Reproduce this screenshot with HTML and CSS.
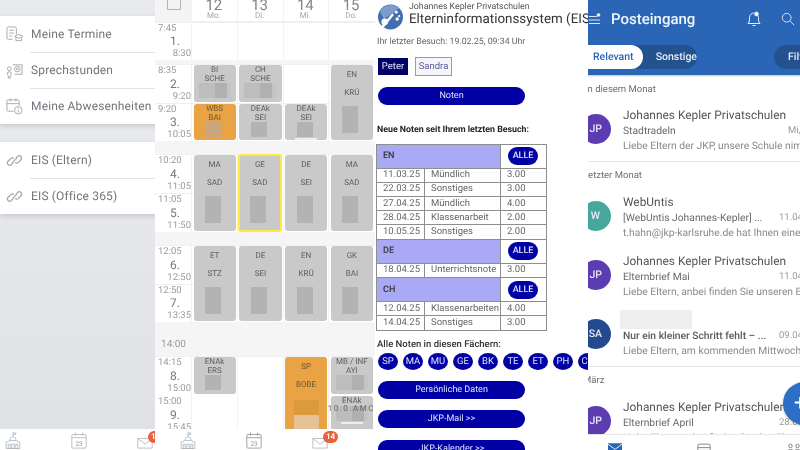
FILE: index.html
```html
<!DOCTYPE html>
<html lang="de">
<head>
<meta charset="utf-8">
<title>Schul-Apps</title>
<link rel="stylesheet" href="styles.css">
</head>
<body>
<main class="shot">

<section class="menu">
  <div class="menu-card">
    <div class="menu-row"><svg class="menu-ico" viewBox="0 0 18 18"><path d="M11 9V2.500A1.500 1.500 0 0 0 9.500 1H2.500A1.500 1.500 0 0 0 1 2.500v10A1.500 1.500 0 0 0 2.500 14H7M3.500 4.500h5M3.500 7.500h5M3.500 10.500h3M9 11l4.500-2 4.500 2-4.500 2zM10.500 12.500v3h6v-3"/></svg><span class="menu-label">Meine Termine</span></div>
    <div class="menu-row"><svg class="menu-ico" viewBox="0 0 18 18"><circle cx="3.500" cy="7" r="2"/><path d="M2 10.500h3l.5 3-1 1v2.500H2.500V14.500l-1-1zM7 3h10v10H9"/><circle cx="12" cy="7.500" r="3"/><circle cx="12" cy="7.500" r="1"/></svg><span class="menu-label">Sprechstunden</span></div>
    <div class="menu-row"><svg class="menu-ico" viewBox="0 0 18 18"><path d="M8 14H2.500A1.500 1.500 0 0 1 1 12.500v-9A1.500 1.500 0 0 1 2.500 2h10A1.500 1.500 0 0 1 14 3.500V8M1 6h13M4.500 .5v3M10.500 .5v3"/><circle cx="13" cy="13" r="4"/><path d="M13 12.500v3M13 10.500v1"/></svg><span class="menu-label">Meine Abwesenheiten</span></div>
  </div>
  <div class="menu-card menu-card-low">
    <div class="menu-row"><svg class="menu-ico menu-link" viewBox="0 0 18 18"><path d="M7.500 11.500l-2 2a2.500 2.500 0 0 1-3.500-3.500l3-3a2.500 2.500 0 0 1 3.500 0M10.500 6.500l2-2A2.500 2.500 0 0 1 16 8l-3 3a2.500 2.500 0 0 1-3.500 0M6.500 11.500l5-5"/></svg><span class="menu-label">EIS (Eltern)</span></div>
    <div class="menu-row"><svg class="menu-ico menu-link" viewBox="0 0 18 18"><path d="M7.500 11.500l-2 2a2.500 2.500 0 0 1-3.500-3.500l3-3a2.500 2.500 0 0 1 3.500 0M10.500 6.500l2-2A2.500 2.500 0 0 1 16 8l-3 3a2.500 2.500 0 0 1-3.500 0M6.500 11.500l5-5"/></svg><span class="menu-label">EIS (Office 365)</span></div>
  </div>
  <nav class="app-nav app-nav-shift">
    <div class="nav-item"><svg class="nav-ico" viewBox="0 0 20 22"><path d="M10 1v5M10 1.500h3.500v2H10M6.500 11V8L10 6l3.500 2v3M1.500 21v-8l5-2h7l5 2v8zM4 15.500h2.500V21H4zM8.500 15.500h3V21h-3zM13.500 15.500H16V21h-2.500z"/></svg></div>
    <div class="nav-item"><svg class="nav-ico" viewBox="0 0 20 22"><path d="M2.500 3.500h15a1.500 1.500 0 0 1 1.500 1.500v14a1.500 1.500 0 0 1-1.500 1.500h-15A1.500 1.500 0 0 1 1 19V5a1.500 1.500 0 0 1 1.500-1.500zM1 7.500h18M5.500 1v4M14.500 1v4"/><text class="nav-date" x="10" y="17.500">23</text></svg></div>
    <div class="nav-item"><svg class="nav-ico nav-mail" viewBox="0 0 20 16"><path d="M1 3h18v12H1zM1 3l9 7 9-7"/></svg><span class="badge">14</span></div>
  </nav>
</section>

<section class="plan">
  <div class="plan-grid">
    <div class="vline c0"></div><div class="vline c1"></div><div class="vline c2"></div><div class="vline c3"></div>
    <div class="corner"><span class="checkbox"></span></div>
    <div class="day c1"><b>12</b><span>Mo.</span></div>
    <div class="day c2"><b>13</b><span>Di.</span></div>
    <div class="day c3"><b>14</b><span>Mi.</span></div>
    <div class="day c4"><b>15</b><span>Do.</span></div>

    <div class="band r3"></div><div class="band r6"></div><div class="band r9"></div>
    <div class="band r12"></div>
    <div class="hline r2"></div><div class="hline r4"></div><div class="hline r5"></div><div class="hline r7"></div><div class="hline r8"></div><div class="hline r10"></div><div class="hline r11"></div><div class="hline r13"></div>

    <div class="slot r2"><span>7:45</span><b>1.</b><span class="end">8:30</span></div>
    <div class="slot r4"><span>8:35</span><b>2.</b><span class="end">9:20</span></div>
    <div class="slot r5"><span>9:20</span><b>3.</b><span class="end">10:05</span></div>
    <div class="slot r7"><span>10:20</span><b>4.</b><span class="end">11:05</span></div>
    <div class="slot r8"><span>11:05</span><b>5.</b><span class="end">11:50</span></div>
    <div class="slot r10"><span>12:05</span><b>6.</b><span class="end">12:50</span></div>
    <div class="slot r11"><span>12:50</span><b>7.</b><span class="end">13:35</span></div>
    <div class="noon r12">14:00</div>
    <div class="slot r13"><span>14:15</span><b>8.</b><span class="end">15:00</span></div>
    <div class="slot r14"><span>15:00</span><b>9.</b><span class="end">15:45</span></div>

    <div class="lesson c1 r4"><span>BI</span><span>SCHE</span><i class="blot wide"></i></div>
    <div class="lesson c2 r4"><span>CH</span><span>SCHE</span><i class="blot wide"></i></div>
    <div class="lesson double c4 r4s"><span>EN</span><span>KRÜ</span><i class="blot tall"></i></div>
    <div class="lesson orange c1 r5"><span>WBS</span><span>BAI</span><i class="blot mid"></i></div>
    <div class="lesson c2 r5"><span>DEAk</span><span>SEI</span><i class="blot mid"></i></div>
    <div class="lesson c3 r5"><span>DEAk</span><span>SEI</span><i class="blot mid"></i><i class="bar"></i></div>

    <div class="lesson double c1 r7s"><span>MA</span><span>SAD</span><i class="blot tall"></i></div>
    <div class="lesson double now c2 r7s"><span>GE</span><span>SAD</span><i class="blot tall"></i></div>
    <div class="lesson double c3 r7s"><span>DE</span><span>SEI</span><i class="blot tall"></i></div>
    <div class="lesson double c4 r7s"><span>MA</span><span>SAD</span><i class="blot tall"></i></div>

    <div class="lesson double c1 r10s"><span>ET</span><span>STZ</span><i class="blot tall"></i></div>
    <div class="lesson double c2 r10s"><span>DE</span><span>SEI</span><i class="blot tall"></i></div>
    <div class="lesson double c3 r10s"><span>EN</span><span>KRÜ</span><i class="blot tall"></i></div>
    <div class="lesson double c4 r10s"><span>GK</span><span>BAI</span><i class="blot tall"></i></div>

    <div class="lesson c1 r13"><span>ENAk</span><span>ERS</span><i class="blot mid"></i></div>
    <div class="lesson double orange c3 r13s"><span>SP</span><span>BOBE</span><i class="blot orange-wide"></i><i class="blot orange-light"></i></div>
    <div class="lesson c4 r13"><span>MB / INF</span><span>AYI</span><i class="blot wide"></i></div>
    <div class="lesson c4 r14"><span>ENAk</span><i class="blot wide"></i><i class="bar"></i><span class="ghost">10.0.AMC</span></div>
  </div>
  <nav class="app-nav">
    <div class="nav-item"><svg class="nav-ico" viewBox="0 0 20 22"><path d="M10 1v5M10 1.500h3.500v2H10M6.500 11V8L10 6l3.500 2v3M1.500 21v-8l5-2h7l5 2v8zM4 15.500h2.500V21H4zM8.500 15.500h3V21h-3zM13.500 15.500H16V21h-2.500z"/></svg></div>
    <div class="nav-item"><svg class="nav-ico nav-dark" viewBox="0 0 20 22"><path d="M2.500 3.500h15a1.500 1.500 0 0 1 1.500 1.500v14a1.500 1.500 0 0 1-1.500 1.500h-15A1.500 1.500 0 0 1 1 19V5a1.500 1.500 0 0 1 1.500-1.500zM1 7.500h18M5.500 1v4M14.500 1v4"/><text class="nav-date" x="10" y="17.500">23</text></svg></div>
    <div class="nav-item"><svg class="nav-ico nav-mail" viewBox="0 0 20 16"><path d="M1 3h18v12H1zM1 3l9 7 9-7"/></svg><span class="badge">14</span></div>
  </nav>
</section>

<section class="eis">
  <header class="eis-head">
    <svg class="eis-logo" viewBox="0 0 26 26"><circle cx="13" cy="13" r="13" fill="#3f6fb0"/><path d="M2 7a13 13 0 0 1 20-3l-8 6-8 5z" fill="#7d9ccb"/><path d="M3 23L15 9l1.500 2L6 24z" fill="#fff"/><circle cx="7" cy="18" r="3.500" fill="#fff"/><circle cx="19" cy="8" r="1.500" fill="#fff"/><circle cx="22" cy="12" r="1.200" fill="#fff"/><circle cx="20" cy="15" r="1.800" fill="#fff"/></svg>
    <div class="eis-titles">
      <div class="eis-school">Johannes Kepler Privatschulen</div>
      <div class="eis-title">Elterninformationssystem (EIS)</div>
    </div>
  </header>
  <p class="eis-visit">Ihr letzter Besuch: 19.02.25, 09:34 Uhr</p>
  <div class="kids"><span class="kid kid-on">Peter</span><span class="kid">Sandra</span></div>
  <div class="pill-btn">Noten</div>
  <p class="eis-h">Neue Noten seit Ihrem letzten Besuch:</p>
  <table class="grades">
    <colgroup><col class="col-date"><col class="col-type"><col class="col-mark"></colgroup>
    <tr class="subj"><th colspan="2">EN</th><th><span class="alle">ALLE</span></th></tr>
    <tr><td>11.03.25</td><td>Mündlich</td><td>3.00</td></tr>
    <tr><td>22.03.25</td><td>Sonstiges</td><td>3.00</td></tr>
    <tr><td>27.04.25</td><td>Mündlich</td><td>4.00</td></tr>
    <tr><td>28.04.25</td><td>Klassenarbeit</td><td>2.00</td></tr>
    <tr><td>10.05.25</td><td>Sonstiges</td><td>2.00</td></tr>
    <tr class="subj"><th colspan="2">DE</th><th><span class="alle">ALLE</span></th></tr>
    <tr><td>18.04.25</td><td>Unterrichtsnote</td><td>3.00</td></tr>
    <tr class="subj"><th colspan="2">CH</th><th><span class="alle">ALLE</span></th></tr>
    <tr><td>12.04.25</td><td>Klassenarbeiten</td><td>4.00</td></tr>
    <tr><td>14.04.25</td><td>Sonstiges</td><td>3.00</td></tr>
  </table>
  <p class="eis-all">Alle Noten in diesen Fächern:</p>
  <div class="subjects"><span>SP</span><span>MA</span><span>MU</span><span>GE</span><span>BK</span><span>TE</span><span>ET</span><span>PH</span><span>CH</span></div>
  <div class="pill-btn pill-tight">Persönliche Daten</div>
  <div class="pill-btn pill-tight">JKP-Mail &gt;&gt;</div>
  <div class="pill-btn pill-tight">JKP-Kalender &gt;&gt;</div>
</section>

<section class="mail">
  <header class="mail-head">
    <div class="mail-bar">
      <svg class="burger" viewBox="0 0 12 12"><path d="M0 3.500h8M0 7h11M0 10.500h11"/><circle cx="9.500" cy="2" r="2" class="dot"/></svg>
      <h1 class="mail-title">Posteingang</h1>
      <svg class="mail-bell" viewBox="0 0 16 16"><path d="M8 2a4.500 4.500 0 0 0-4.500 4.500V10L2 12.500h12L12.500 10V6.500A4.500 4.500 0 0 0 8 2zM6.500 14.500h3"/><circle cx="10.500" cy="3" r="2.500" class="dot"/></svg>
      <svg class="mail-search" viewBox="0 0 16 16"><circle cx="6.500" cy="6.500" r="5"/><path d="M10 10l5 5"/></svg>
    </div>
    <div class="mail-tabs">
      <div class="tab-group"><span class="tab tab-on">Relevant</span><span class="tab">Sonstige</span></div>
      <span class="tab-filter">Filter</span>
    </div>
  </header>
  <div class="mail-label">In diesem Monat</div>
  <article class="msg">
    <span class="avatar av-purple">JP</span>
    <div class="msg-body">
      <div class="msg-from">Johannes Kepler Privatschulen</div>
      <div class="msg-sub"><span class="subject subject-long">Stadtradeln</span><span class="date">Mi, 14.05.</span></div>
      <div class="msg-prev">Liebe Eltern der JKP, unsere Schule nimmt teil</div>
    </div>
  </article>
  <div class="mail-rule"></div>
  <div class="mail-label mail-label-b">Letzter Monat</div>
  <article class="msg">
    <span class="avatar av-teal">W</span>
    <div class="msg-body">
      <div class="msg-from">WebUntis</div>
      <div class="msg-sub"><span class="subject">[WebUntis Johannes-Kepler] ...</span><span class="date">11.04.25</span></div>
      <div class="msg-prev">t.hahn@jkp-karlsruhe.de hat Ihnen eine Nachricht</div>
    </div>
  </article>
  <article class="msg">
    <span class="avatar av-purple">JP</span>
    <div class="msg-body">
      <div class="msg-from">Johannes Kepler Privatschulen</div>
      <div class="msg-sub"><span class="subject">Elternbrief Mai</span><span class="date">11.04.25</span></div>
      <div class="msg-prev">Liebe Eltern, anbei finden Sie unseren Elternbrief</div>
    </div>
  </article>
  <article class="msg">
    <span class="avatar av-navy">SA</span>
    <div class="msg-body">
      <div class="msg-blot"></div>
      <div class="msg-sub"><span class="subject subject-strong">Nur ein kleiner Schritt fehlt – ...</span><span class="date">09.04.25</span></div>
      <div class="msg-prev">Liebe Eltern, am kommenden Mittwoch findet</div>
    </div>
  </article>
  <div class="mail-rule mail-rule-b"></div>
  <div class="mail-label mail-label-b">März</div>
  <article class="msg">
    <span class="avatar av-purple">JP</span>
    <div class="msg-body">
      <div class="msg-from">Johannes Kepler Privatschulen</div>
      <div class="msg-sub"><span class="subject">Elternbrief April</span><span class="date">28.03.25</span></div>
      <div class="msg-prev">Liebe Eltern, anbei finden Sie den Elternbrief</div>
    </div>
  </article>
  <span class="fab">+</span>
  <nav class="mail-nav">
    <svg class="mail-nav-ico mail-nav-on" viewBox="0 0 16 12"><path d="M0 0h16v12H0z"/><path d="M0 1l8 6 8-6" class="cut"/></svg>
    <svg class="mail-nav-ico mail-nav-cal" viewBox="0 0 16 12"><path d="M1 12V3a2 2 0 0 1 2-2h10a2 2 0 0 1 2 2v9M1 5h14M4 8h1M7.500 8h1M11 8h1"/></svg>
    <svg class="mail-nav-ico mail-nav-ppl" viewBox="0 0 16 12"><circle cx="4" cy="3" r="2"/><circle cx="12" cy="3" r="2"/><path d="M0 11a4 4 0 0 1 8 0M8 11a4 4 0 0 1 8 0"/></svg>
  </nav>
</section>

</main>
</body>
</html>
```
FILE: styles.css
```css
* { box-sizing: border-box; }
html, body { margin: 0; padding: 0; background: #fff; }
body { width: 800px; height: 450px; overflow: hidden; font-family: Roboto, "Liberation Sans", sans-serif; text-rendering: geometricPrecision; }
.shot { display: flex; width: 800px; height: 450px; filter: blur(0.45px); }

/* Panel 1: menu */
.menu { position: relative; width: 155px; height: 450px; flex: none; overflow: hidden; display: flex; flex-direction: column; padding-top: 16px; background: linear-gradient(#e9eaed 0, #e4e5e9 15%, #e8e9ec 30%, #dfe1e5 100%); }
.menu-card { width: 175px; background: #fff; box-shadow: 0 2px 5px rgba(0,0,0,.14); flex: none; }
.menu-card-low { margin-top: 18px; }
.menu-row { display: flex; align-items: center; height: 36px; position: relative; }
.menu-row + .menu-row::before { content: ""; position: absolute; left: 30px; right: 0; top: 0; height: 1px; background: #e3e3e3; }
.menu-ico { width: 17px; height: 17px; margin-left: 6px; fill: none; stroke: #a3a8ad; stroke-width: 1; flex: none; }
.menu-link { stroke-width: 1.3; }
.menu-label { margin-left: 8px; font-size: 12px; color: #70767c; letter-spacing: .15px; white-space: nowrap; }

/* shared app nav */
.app-nav { margin-top: auto; height: 21px; flex: none; background: #fff; display: grid; grid-template-columns: repeat(3, 66px); }
.app-nav-shift { margin-left: -20px; width: 198px; }
.nav-item { position: relative; display: flex; justify-content: center; align-items: flex-start; }
.nav-ico { width: 16px; height: 21px; fill: none; stroke: #a9b4bd; stroke-width: 1; margin-top: 1px; }
.nav-dark { stroke: #8a8f93; }
.nav-mail { margin-top: 3px; overflow: visible; }
.nav-date { font-size: 8px; fill: #999; stroke: none; text-anchor: middle; }
.badge { position: absolute; left: 36px; top: 2px; width: 15px; height: 12px; border-radius: 6px; background: #e9603a; color: #fff; font-size: 8px; font-weight: 700; line-height: 12px; text-align: center; }

/* Panel 2: timetable */
.plan { width: 220px; height: 450px; flex: none; overflow: hidden; display: flex; flex-direction: column; background: #fff; }
.plan-grid { position: relative; height: 429px; flex: none; overflow: hidden; display: grid; grid-template-columns: 37px repeat(4, 1fr); grid-template-rows: 22px 38px 4px 39px 38px 13px 39px 39px 13px 39px 38px 34px 39px 39px; }
.c0 { grid-column: 1; } .c1 { grid-column: 2; } .c2 { grid-column: 3; } .c3 { grid-column: 4; } .c4 { grid-column: 5; }
.r2 { grid-row: 2; } .r3 { grid-row: 3; } .r4 { grid-row: 4; } .r5 { grid-row: 5; } .r6 { grid-row: 6; } .r7 { grid-row: 7; } .r8 { grid-row: 8; } .r9 { grid-row: 9; } .r10 { grid-row: 10; } .r11 { grid-row: 11; } .r12 { grid-row: 12; } .r13 { grid-row: 13; } .r14 { grid-row: 14; }
.r4s { grid-row: 4 / span 2; } .r7s { grid-row: 7 / span 2; } .r10s { grid-row: 10 / span 2; } .r13s { grid-row: 13 / span 2; }
.vline { grid-row: 1 / -1; border-right: 1px solid #f2f2f2; }
.band { grid-column: 1 / -1; background: #f5f5f5; }
.hline { grid-column: 1 / -1; border-top: 1px solid #f0f0f0; }
.corner { grid-column: 1; grid-row: 1; background: #f4f4f4; display: flex; justify-content: center; }
.checkbox { width: 14px; height: 10px; border: 1px solid #b4b4b4; border-top: 0; border-radius: 0 0 1px 1px; }
.day { grid-row: 1; display: flex; flex-direction: column; align-items: center; border-bottom: 1px solid #eee; padding-right: 2px; }
.day b { font-weight: 400; font-size: 15px; line-height: 11px; color: #858585; }
.day span { font-size: 8px; line-height: 10px; color: #a5a5a5; }
.slot { grid-column: 1; display: flex; flex-direction: column; justify-content: space-between; padding: 1px 1px 0 3px; font-size: 9.500px; line-height: 12px; color: #9a9a9a; }
.slot b { font-weight: 400; font-size: 12px; line-height: 13px; color: #777; padding-left: 12px; }
.slot .end { text-align: right; }
.noon { grid-column: 1; display: flex; align-items: center; justify-content: center; padding-top: 11px; font-size: 10px; color: #999; }
.lesson { position: relative; margin: 1px 2px 1px 1.5px; border-radius: 3px; background: #c9c9c9; display: flex; flex-direction: column; align-items: center; padding-top: 1px; font-size: 8px; line-height: 8.500px; color: #5d5d5d; overflow: hidden; }
.lesson.double { padding-top: 1px; line-height: 18px; }
.lesson.orange { background: #e9a344; color: #6b5330; }
.lesson.now { border: 2px solid #fdec3f; padding-top: 0; margin: 0 1.500px 0 0; }
.lesson.c4.r14 { overflow: visible; }
.blot { display: block; background: #b3b3b3; flex: none; }
.wide { width: 32px; height: 15px; background: linear-gradient(90deg, #bdbdbd 0 50%, #b0b0b0 50% 88%, #c4c4c4 88%); }
.mid { width: 16px; height: 15px; margin-right: 3px; }
.tall { width: 16px; height: 27px; margin-top: 4px; margin-right: 3px; }
.orange .mid { background: #caa67f; }
.orange-wide { width: 25px; height: 15px; background: #dc9a3f; margin-top: 6px; }
.orange-light { width: 25px; height: 14px; background: #e6c096; }
.bar { display: block; width: 22px; height: 2px; background: #eeeeee; margin-top: 1px; flex: none; }
.orange .bar { background: #e6e6e6; }
.ghost { position: absolute; left: -3px; top: 9px; font-size: 8px; color: #666; white-space: nowrap; letter-spacing: 1.500px; }

/* Panel 3: EIS */
.eis { width: 213px; height: 450px; flex: none; overflow: hidden; background: #fff; padding-left: 2px; color: #444; }
.eis-head { display: flex; align-items: flex-start; padding: 4px 0 0 1px; height: 36px; }
.eis-logo { width: 25px; height: 26px; flex: none; }
.eis-titles { margin-left: 6px; white-space: nowrap; }
.eis-school { font-size: 8.800px; line-height: 9px; color: #555; margin-top: -1px; }
.eis-title { font-size: 13.400px; line-height: 16px; color: #333; }
.eis-visit { margin: 0; font-size: 8.800px; line-height: 12px; color: #666; }
.kids { display: flex; gap: 7px; align-items: center; margin: 9px 0 0 1px; height: 19px; }
.kid { display: inline-block; width: 37px; height: 19px; border: 1px solid #9898b8; background: #f5f5fa; color: #5a5a9a; font-size: 9.500px; line-height: 17px; text-align: center; }
.kid-on { width: 30px; height: 17px; background: #000066; border-color: #000066; color: #e8e8ff; line-height: 15px; }
.pill-btn { width: 147px; height: 18px; margin: 11px 0 0 1px; border-radius: 9px; background: #0000a5; color: #dfe3ff; font-size: 9px; line-height: 18px; text-align: center; }
.eis-h { margin: 19px 0 0; font-size: 8.800px; font-weight: 700; line-height: 12px; color: #222; }
.grades { width: 170px; margin: 7.500px 0 0 -1px; border-collapse: collapse; table-layout: fixed; font-size: 9.500px; color: #666; }
.col-date { width: 48px; }
.col-type { width: 76px; }
.col-mark { width: 46px; }
.grades td, .grades th { border: 1px solid #8e8e8e; padding: 0 0 0 6px; height: 14.200px; line-height: 12px; font-weight: 400; text-align: left; white-space: nowrap; }
.grades .subj th { height: 24.200px; background: #a9a9f5; font-weight: 500; color: #333; font-size: 9px; }
.grades .subj th:last-child { background: #fff; padding-left: 7px; }
.alle { display: block; width: 30px; height: 18px; border-radius: 9px; background: #0000a5; color: #dfe3ff; font-size: 9px; line-height: 18px; text-align: center; }
.eis-all { margin: 8px 0 0; font-size: 9.500px; line-height: 12px; font-weight: 500; color: #333; }
.subjects { display: flex; gap: 5px; margin: 2px 0 11px 1px; width: 240px; }
.subjects span { flex: none; width: 20px; height: 17px; border-radius: 50%; background: #0000a5; color: #dfe3ff; font-size: 9.500px; line-height: 17px; text-align: center; }
.eis .pill-tight { margin-top: 0; margin-bottom: 11.500px; }

/* Panel 4: mail */
.mail { position: relative; width: 212px; height: 450px; flex: none; overflow: hidden; background: #fff; }
.mail-head { height: 75px; background: #2b65b5; box-shadow: 0 1px 2px rgba(0,0,0,.25); position: relative; }
.mail-bar { display: flex; align-items: center; height: 38px; }
.burger { width: 12px; height: 12px; margin-left: 1px; fill: none; stroke: #dbe6f5; stroke-width: 1; flex: none; }
.dot { fill: #fff; stroke: #2b65b5; stroke-width: .6; }
.mail-title { margin: 0 0 0 10px; width: 135px; font-size: 15px; font-weight: 500; color: #f2f6fc; line-height: 18px; white-space: nowrap; }
.mail-bell { width: 16px; height: 16px; fill: none; stroke: #e8eef8; stroke-width: 1; flex: none; }
.mail-search { width: 14px; height: 14px; fill: none; stroke: #e8eef8; stroke-width: 1; flex: none; margin-left: 19px; }
.mail-tabs { display: flex; align-items: center; height: 24px; margin-top: 7px; }
.tab-group { display: flex; width: 121px; height: 24px; margin-left: -12px; border-radius: 12px; background: #24528f; flex: none; font-size: 10.500px; font-weight: 500; }
.tab { display: block; line-height: 24px; color: #e6edf7; padding-left: 12.500px; }
.tab-on { width: 69px; padding-left: 17px; border-radius: 12px; background: #fff; color: #2b65b5; }
.tab-filter { margin-left: 77px; width: 50px; height: 24px; padding-left: 14px; border-radius: 12px; background: #24528f; color: #e6edf7; font-size: 10.500px; font-weight: 500; line-height: 24px; flex: none; }
.mail-label { margin-left: -3px; height: 25.500px; padding-top: 9px; font-size: 9.500px; line-height: 12px; color: #6e6e6e; white-space: nowrap; }
.mail-label-b { margin-left: -5px; padding-top: 8px; }
.msg { display: flex; height: 59px; padding-top: 7px; }
.avatar { flex: none; width: 30px; height: 30px; margin: 6px 12px 0 -7px; border-radius: 50%; color: #e8e8f5; font-size: 10.500px; font-weight: 500; line-height: 30px; text-align: right; padding-right: 9px; }
.av-purple { background: #5c3cb0; }
.av-teal { background: #46a89c; padding-right: 11px; }
.av-navy { background: #234a8c; padding-right: 9px; }
.msg-body { flex: none; width: 200px; white-space: nowrap; }
.msg-from { font-size: 11.900px; line-height: 15px; color: #565656; }
.msg-blot { width: 72px; height: 19px; margin: -3px 0 -1px -3px; background: #eeeeee; }
.msg-sub { display: flex; font-size: 10.300px; line-height: 15px; color: #777; }
.subject { width: 156px; flex: none; overflow: hidden; color: #6a6a6a; }
.subject-long { width: 165px; }
.subject-strong { color: #5a5a5a; font-weight: 500; }
.date { color: #9a9a9a; font-size: 9.500px; flex: none; }
.msg-prev { font-size: 10.300px; line-height: 15px; color: #8a8a8a; }
.mail-rule { height: 1px; margin-top: 1.500px; background: #e6e6e6; }
.fab { position: absolute; left: 195px; top: 382px; width: 43px; height: 43px; border-radius: 50%; background: #2c6fc4; color: #fff; font-size: 22px; line-height: 43px; text-align: left; text-indent: 11px; box-shadow: 0 1px 3px rgba(0,0,0,.25); }
.mail-nav { position: absolute; left: 0; right: 0; top: 434px; height: 16px; background: #fff; border-top: 1px solid #e8e8e8; display: flex; padding: 8px 0 0 20px; }
.mail-nav-ico { width: 14px; height: 11px; flex: none; fill: none; stroke: #777; stroke-width: 1; }
.mail-nav-on { fill: #2b65b5; stroke: none; }
.mail-nav-on .cut { fill: none; stroke: #fff; stroke-width: 1; }
.mail-nav-cal { margin-left: 75px; }
.mail-nav-ppl { margin-left: 76px; }
```
